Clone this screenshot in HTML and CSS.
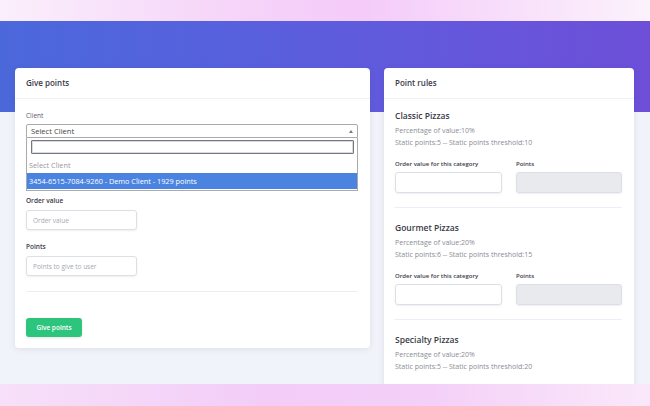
FILE: index.html
```html
<!DOCTYPE html>
<html>
<head>
<meta charset="utf-8">
<link rel="stylesheet" href="styles.css">
</head>
<body>
<div class="top-band"></div>
<div class="page">
  <div class="grid">
    <section class="card">
      <div class="card-header">Give points</div>
      <div class="card-body">
        <div class="label first">Client</div>
        <div class="select open">
          <span>Select Client</span>
          <span class="arrow"></span>
        </div>
        <div class="dropdown">
          <div class="search-wrap"><div class="search"></div></div>
          <div class="option muted">Select Client</div>
          <div class="option active">3454-6515-7084-9260 - Demo Client - 1929 points</div>
        </div>
        <div class="label bold">Order value</div>
        <div class="input small">Order value</div>
        <div class="label bold gap">Points</div>
        <div class="input small">Points to give to user</div>
        <div class="rule"></div>
        <button class="btn">Give points</button>
      </div>
    </section>
    <section class="card">
      <div class="card-header">Point rules</div>
      <div class="card-body">
        <div class="cat first">
          <div class="cat-title">Classic Pizzas</div>
          <div class="cat-text t1">Percentage of value:10%</div>
          <div class="cat-text">Static points:5 -- Static points threshold:10</div>
          <div class="pair">
            <div class="field"><div class="flabel">Order value for this category</div><div class="input wide"></div></div>
            <div class="field"><div class="flabel">Points</div><div class="input wide disabled"></div></div>
          </div>
        </div>
        <div class="cat">
          <div class="cat-title">Gourmet Pizzas</div>
          <div class="cat-text t1">Percentage of value:20%</div>
          <div class="cat-text">Static points:6 -- Static points threshold:15</div>
          <div class="pair">
            <div class="field"><div class="flabel">Order value for this category</div><div class="input wide"></div></div>
            <div class="field"><div class="flabel">Points</div><div class="input wide disabled"></div></div>
          </div>
        </div>
        <div class="cat last">
          <div class="cat-title">Specialty Pizzas</div>
          <div class="cat-text t1">Percentage of value:20%</div>
          <div class="cat-text">Static points:5 -- Static points threshold:20</div>
        </div>
      </div>
    </section>
  </div>
</div>
<div class="bottom-band"></div>
</body>
</html>
```
FILE: styles.css
```css
html, body {
  margin: 0;
  padding: 0;
}
body {
  width: 650px;
  height: 406px;
  overflow: hidden;
  position: relative;
  font-family: "Open Sans", "Noto Sans", sans-serif;
  background: #f1f3fa;
  color: #3a3a48;
}
.top-band {
  height: 21px;
  background: linear-gradient(90deg, #fbeffb 0%, #f6d8f9 30%, #f4cbf9 55%, #f8e0fa 80%, #fcf2fc 100%);
}
.page {
  background:
    linear-gradient(90deg, #4b68db 0%, #5761dd 35%, #615adc 60%, #6d4fd8 100%) top left / 100% 91px no-repeat,
    #f1f3fa;
  padding: 47px 16px 0 15px;
}
.grid {
  display: grid;
  grid-template-columns: 355px 250px;
  column-gap: 14px;
  align-items: start;
}
.card {
  background: #fff;
  border-radius: 4px;
  box-shadow: 0 1px 6px rgba(50, 50, 93, 0.10);
}
.card-header {
  height: 30px;
  line-height: 30px;
  padding: 0 11px;
  font-size: 8px;
  font-weight: 600;
  color: #3a3a48;
  border-bottom: 1px solid #f0f1f5;
}
.card-body {
  padding: 0 12px 11px 11px;
}
.label {
  font-size: 6.5px;
  line-height: 10px;
  color: #5a5a66;
}
.label.first { padding-top: 12px; }
.label.bold { font-weight: 600; margin-top: 5px; color: #3a3a48; }
.label.gap { margin-top: 12px; }
.select {
  margin-top: 3px;
  height: 12px;
  border: 1px solid #aaa;
  border-radius: 2px 2px 0 0;
  display: flex;
  align-items: center;
  justify-content: space-between;
  padding: 0 4px;
  font-size: 7.6px;
  color: #444;
}
.arrow {
  width: 0;
  height: 0;
  border-left: 2px solid transparent;
  border-right: 2px solid transparent;
  border-bottom: 3px solid #777;
}
.dropdown {
  border: 1px solid #aaa;
  border-top: none;
  padding-bottom: 1px;
}
.search-wrap {
  padding: 2px 3px 3px 4px;
}
.search {
  height: 12px;
  border: 1px solid #777;
  border-radius: 1px;
  box-shadow: inset 0 0 0 1px #d5dbe7;
}
.option {
  height: 16px;
  line-height: 16px;
  font-size: 7.3px;
  padding: 0 2px;
}
.option.muted { color: #999; }
.option.active {
  background: #4a84e0;
  color: #fff;
}
.input {
  border: 1px solid #dcdfe6;
  border-radius: 3px;
  box-shadow: 0 1px 2px rgba(50, 50, 93, 0.08);
  box-sizing: border-box;
  font-size: 6.5px;
  color: #a6a8b0;
  display: flex;
  align-items: center;
  padding: 0 6px;
}
.input.small {
  width: 111px;
  height: 20px;
  margin-top: 4px;
}
.rule {
  margin-top: 15px;
  border-top: 1px solid #eceef3;
}
.btn {
  margin-top: 26px;
  width: 56px;
  height: 19px;
  border: none;
  border-radius: 3px;
  background: #2dc47e;
  color: #fff;
  font-family: "Open Sans", "Noto Sans", sans-serif;
  font-size: 6.5px;
  font-weight: 600;
  padding: 0;
  box-shadow: 0 1px 3px rgba(50, 50, 93, 0.12);
  display: block;
}
.cat {
  padding: 14px 0 14px;
  border-bottom: 1px solid #eceef3;
}
.cat.first { padding-top: 11px; }
.cat.last { border-bottom: none; }
.cat-title {
  font-size: 8.5px;
  font-weight: 600;
  line-height: 12px;
  color: #3a3a48;
}
.cat-text {
  font-size: 7px;
  line-height: 12px;
  color: #8b8c96;
}
.cat-text.t1 { margin-top: 3px; }
.pair {
  display: grid;
  grid-template-columns: 107px 106px;
  column-gap: 14px;
  margin-top: 10px;
}
.flabel {
  font-size: 6px;
  font-weight: 600;
  line-height: 10px;
  color: #3a3a48;
}
.input.wide {
  margin-top: 3px;
  height: 21px;
}
.input.disabled {
  background: #e9eaee;
}
.bottom-band {
  position: absolute;
  left: 0;
  right: 0;
  bottom: 0;
  height: 22px;
  background: linear-gradient(90deg, #f7e0f9 0%, #f3cdf8 40%, #f4cff8 65%, #fae8fa 100%);
}
```
